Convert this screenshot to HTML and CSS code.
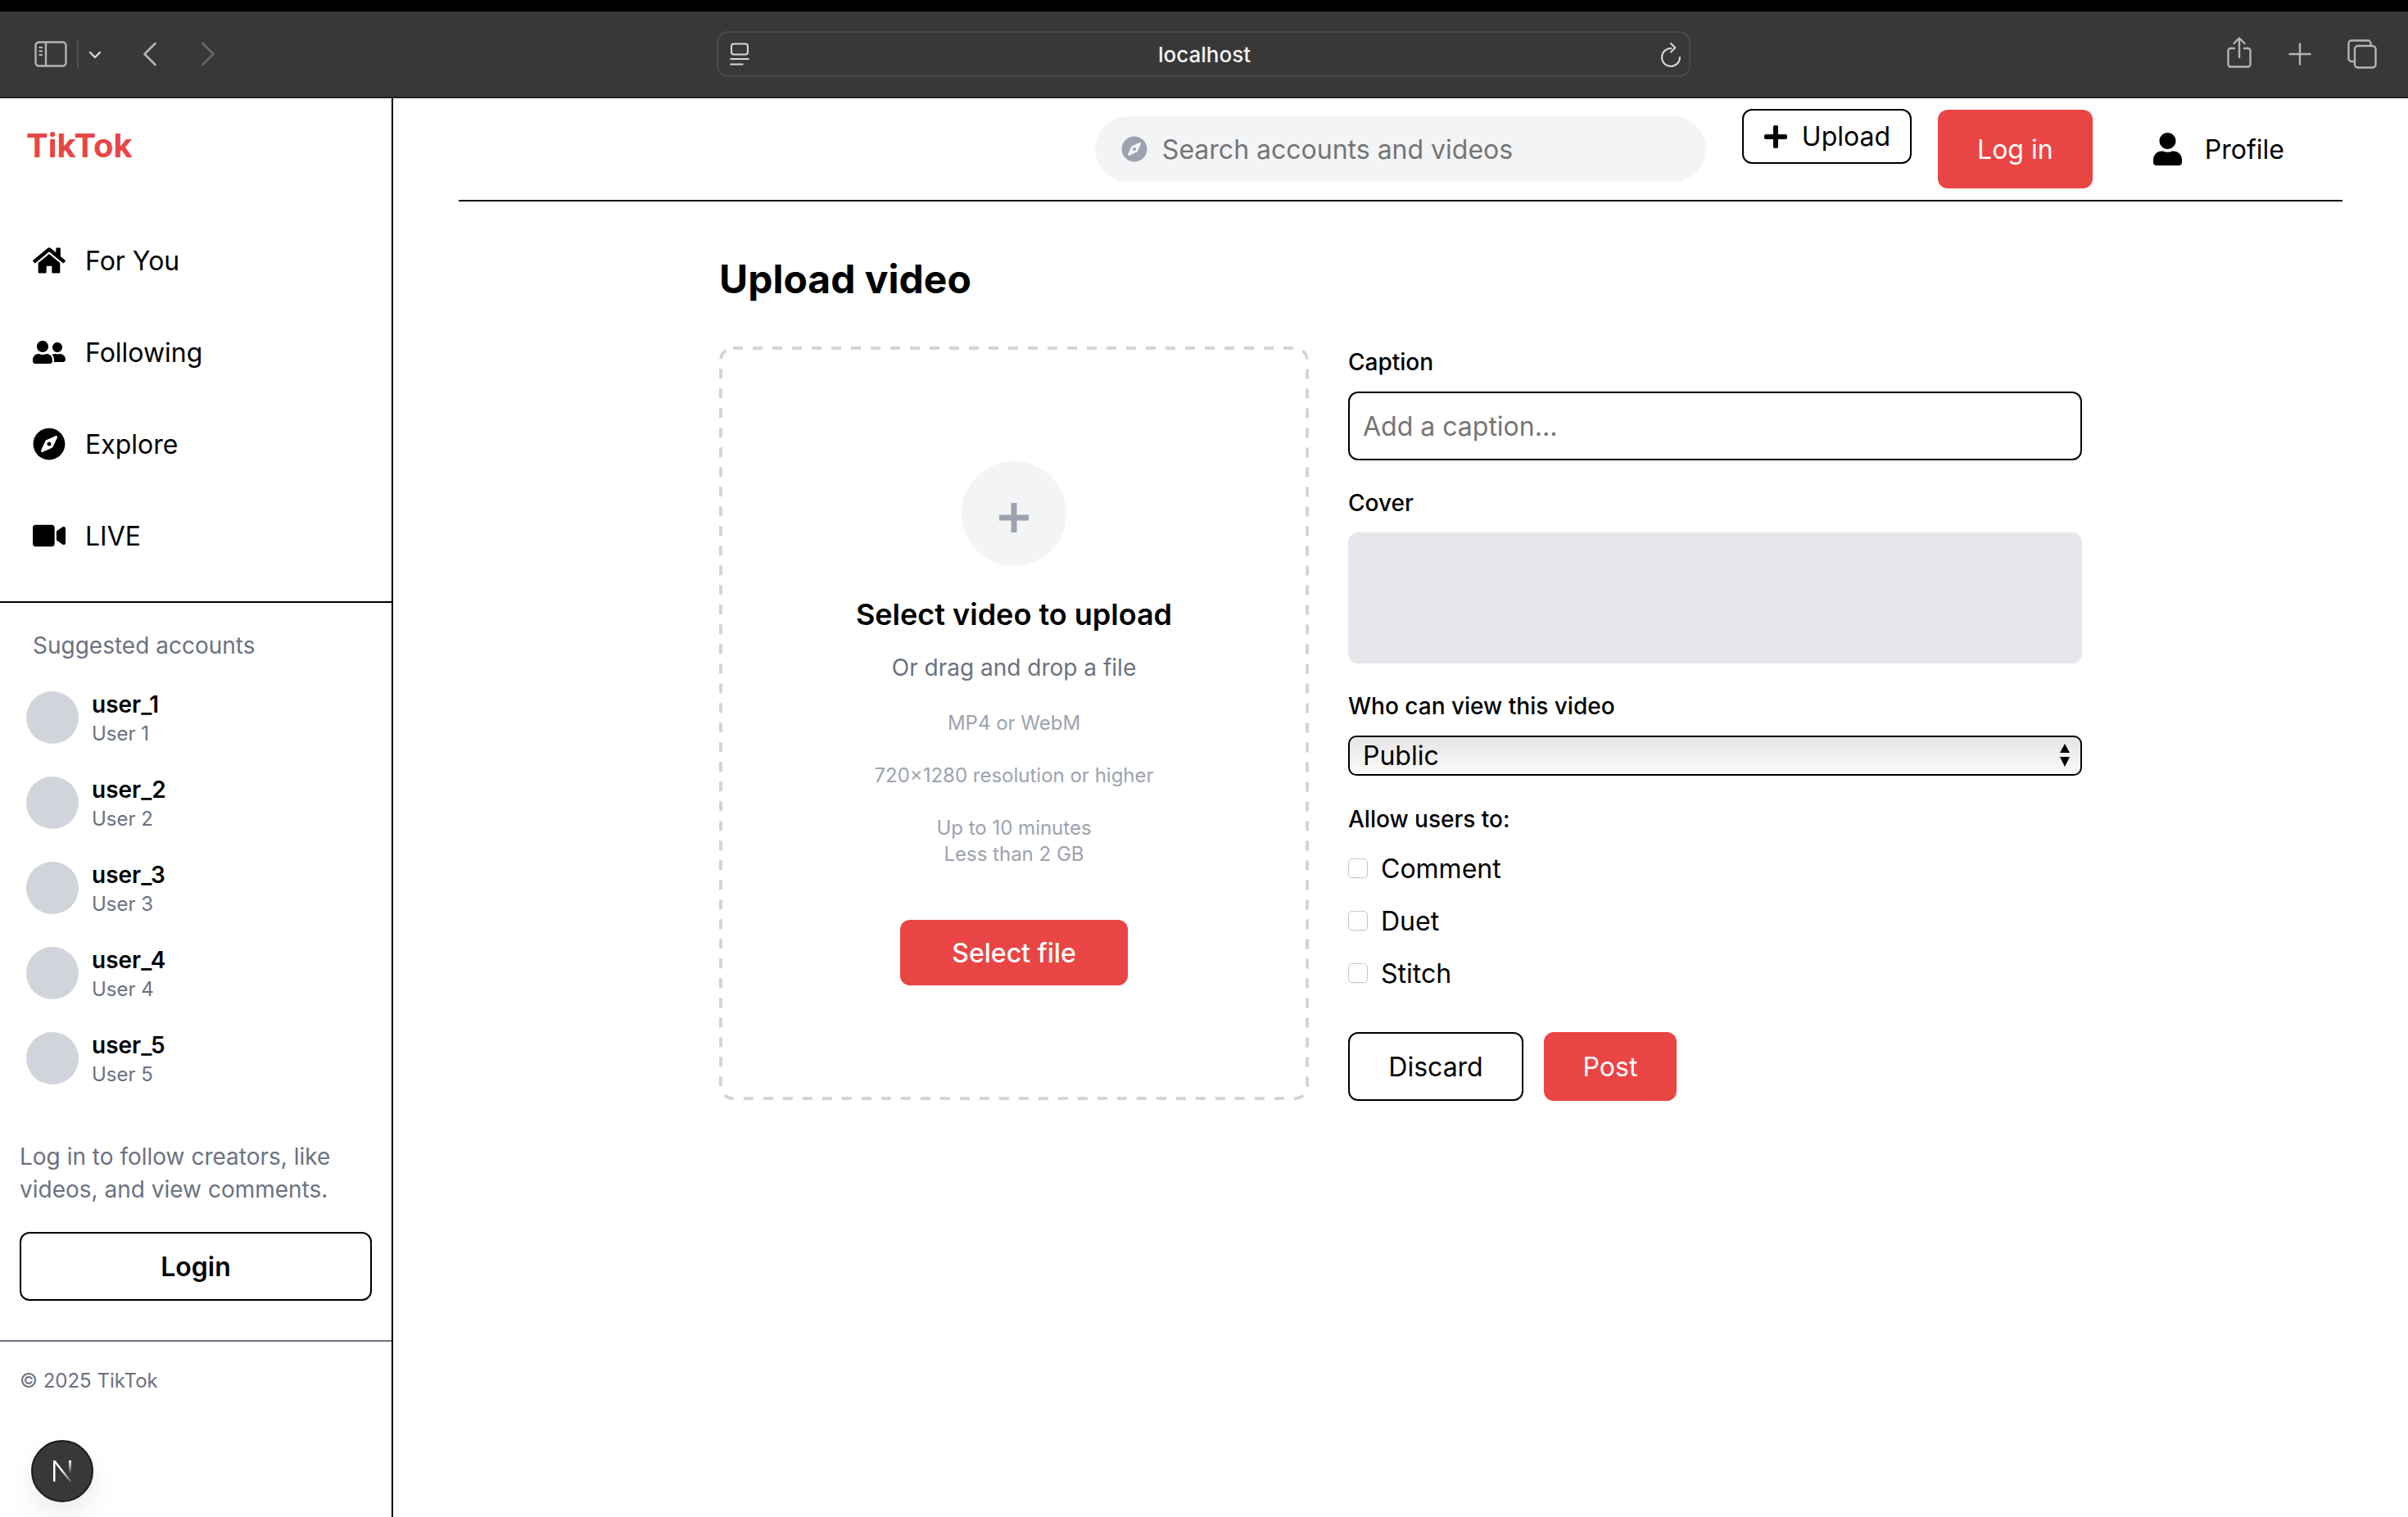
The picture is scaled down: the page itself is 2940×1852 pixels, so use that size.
FILE: index.html
```html
<!DOCTYPE html>
<html>
<head>
    <title>TikTok - Upload</title>
    <meta charset="utf-8">
    <link rel="stylesheet" href="styles.css">
</head>
<body>
    <div class="browser-bar">
        <div class="bar-left">
            <svg class="ic-sidebar" viewBox="0 0 40 32" fill="none" stroke="#b4b4b4" stroke-width="2.4"><rect x="1.5" y="1.5" width="37" height="29" rx="4"/><path d="M14 2v28"/><path d="M5.5 8h4.5M5.5 12.5h4.5M5.5 17h4.5" stroke-width="1.8"/></svg>
            <span class="bar-sep"></span>
            <svg class="ic-chevron" viewBox="0 0 16 10" fill="none" stroke="#d8d8d8" stroke-width="2.4" stroke-linecap="round" stroke-linejoin="round"><path d="M2 2l6 6 6-6"/></svg>
            <svg class="ic-back" viewBox="0 0 18 30" fill="none" stroke="#b4b4b4" stroke-width="2.6" stroke-linecap="round" stroke-linejoin="round"><path d="M15.500 2L2.500 15l13 13"/></svg>
            <svg class="ic-forward" viewBox="0 0 18 30" fill="none" stroke="#686868" stroke-width="2.6" stroke-linecap="round" stroke-linejoin="round"><path d="M2.500 2l13 13-13 13"/></svg>
        </div>
        <div class="url-bar">
            <svg class="ic-page" viewBox="0 0 24 28" fill="none" stroke="#d8d8d8" stroke-width="2"><rect x="2" y="1.500" width="20" height="13" rx="3"/><path d="M0.500 20h23M0.500 26.500h16"/></svg>
            <span class="url-text">localhost</span>
            <svg class="ic-reload" viewBox="0 0 28 32" fill="none" stroke="#dcdcdc" stroke-width="2" stroke-linecap="round" stroke-linejoin="round"><path d="M14.500 9A11 11 0 1 0 25 20"/><path d="M14 3l5.300 5.300L14 13.600"/></svg>
        </div>
        <div class="bar-right">
            <svg class="ic-share" viewBox="0 0 30 38" fill="none" stroke="#b4b4b4" stroke-width="2.400" stroke-linecap="round" stroke-linejoin="round"><path d="M9 14H4.500a3 3 0 0 0-3 3v16.500a3 3 0 0 0 3 3h21a3 3 0 0 0 3-3V17a3 3 0 0 0-3-3H21"/><path d="M15 25V2M8.500 8L15 1.500 21.500 8"/></svg>
            <svg class="ic-newtab" viewBox="0 0 28 28" fill="none" stroke="#b4b4b4" stroke-width="2.400" stroke-linecap="round"><path d="M14 1.500v25M1.500 14h25"/></svg>
            <svg class="ic-tabs" viewBox="0 0 36 36" fill="none" stroke="#b4b4b4" stroke-width="2.400"><path d="M8 27H5a3.500 3.500 0 0 1-3.500-3.500V5A3.500 3.500 0 0 1 5 1.500h20A3.500 3.500 0 0 1 28.500 5v3"/><rect x="9" y="8" width="25.500" height="26.500" rx="4"/></svg>
        </div>
    </div>

    <div class="app">
        <aside class="sidebar">
            <div class="logo">TikTok</div>
            <nav class="nav">
                <a class="nav-item">
                    <svg class="nav-icon" viewBox="0 0 576 512"><path d="M280.37 148.26L96 300.11V464a16 16 0 0 0 16 16l112.06-.29a16 16 0 0 0 15.92-16V368a16 16 0 0 1 16-16h64a16 16 0 0 1 16 16v95.64a16 16 0 0 0 16 16.05L464 480a16 16 0 0 0 16-16V300L295.67 148.26a12.19 12.19 0 0 0-15.3 0zM571.6 251.47L488 182.56V44.05a12 12 0 0 0-12-12h-56a12 12 0 0 0-12 12v72.61L318.47 43a48 48 0 0 0-61 0L4.34 251.47a12 12 0 0 0-1.6 16.9l25.5 31A12 12 0 0 0 45.15 301l235.22-193.74a12.19 12.19 0 0 1 15.3 0L530.9 301a12 12 0 0 0 16.9-1.6l25.5-31a12 12 0 0 0-1.7-16.93z"/></svg>
                    For You
                </a>
                <a class="nav-item">
                    <svg class="nav-icon" viewBox="0 0 640 512"><path d="M192 256c61.9 0 112-50.1 112-112S253.9 32 192 32 80 82.1 80 144s50.1 112 112 112zm76.8 32h-8.3c-20.8 10-43.9 16-68.5 16s-47.6-6-68.5-16h-8.3C51.6 288 0 339.6 0 403.2V432c0 26.5 21.5 48 48 48h288c26.5 0 48-21.5 48-48v-28.8c0-63.6-51.6-115.2-115.2-115.2zM480 256c53 0 96-43 96-96s-43-96-96-96-96 43-96 96 43 96 96 96zm48 32h-3.8c-13.9 4.8-28.6 8-44.2 8s-30.3-3.2-44.2-8H432c-20.4 0-39.2 5.9-55.7 15.4 24.4 26.3 39.7 61.2 39.7 99.8v38.4c0 2.2-.5 4.3-.6 6.4H592c26.5 0 48-21.5 48-48 0-61.9-50.1-112-112-112z"/></svg>
                    Following
                </a>
                <a class="nav-item">
                    <svg class="nav-icon" viewBox="0 0 496 512"><path d="M225.38 233.37c-12.5 12.5-12.5 32.76 0 45.25 12.49 12.5 32.76 12.5 45.25 0 12.5-12.5 12.5-32.76 0-45.25-12.5-12.49-32.76-12.49-45.25 0zM248 8C111.03 8 0 119.03 0 256s111.03 248 248 248 248-111.03 248-248S384.97 8 248 8zm126.14 148.05L308.17 300.4a31.938 31.938 0 0 1-15.77 15.77l-144.34 65.97c-16.65 7.61-33.81-9.55-26.2-26.2l65.98-144.35a31.938 31.938 0 0 1 15.77-15.77l144.34-65.97c16.65-7.6 33.8 9.55 26.19 26.2z"/></svg>
                    Explore
                </a>
                <a class="nav-item">
                    <svg class="nav-icon" viewBox="0 0 576 512"><path d="M336.2 64H47.8C21.4 64 0 85.4 0 111.8v288.4C0 426.6 21.4 448 47.8 448h288.4c26.4 0 47.8-21.4 47.8-47.8V111.8c0-26.4-21.4-47.8-47.8-47.8zm189.4 37.7L416 177.3v157.4l109.6 75.5c21.2 14.6 50.4-.3 50.4-25.8V127.5c0-25.4-29.1-40.4-50.4-25.8z"/></svg>
                    LIVE
                </a>
            </nav>

            <div class="suggested">
                <div class="suggested-title">Suggested accounts</div>
                <div class="account">
                    <div class="avatar"></div>
                    <div><div class="account-name">user_1</div><div class="account-sub">User 1</div></div>
                </div>
                <div class="account">
                    <div class="avatar"></div>
                    <div><div class="account-name">user_2</div><div class="account-sub">User 2</div></div>
                </div>
                <div class="account">
                    <div class="avatar"></div>
                    <div><div class="account-name">user_3</div><div class="account-sub">User 3</div></div>
                </div>
                <div class="account">
                    <div class="avatar"></div>
                    <div><div class="account-name">user_4</div><div class="account-sub">User 4</div></div>
                </div>
                <div class="account">
                    <div class="avatar"></div>
                    <div><div class="account-name">user_5</div><div class="account-sub">User 5</div></div>
                </div>
            </div>

            <div class="login-box">
                <p class="login-text">Log in to follow creators, like videos, and view comments.</p>
                <button class="login-btn">Login</button>
            </div>

            <div class="copyright">© 2025 TikTok</div>
            <div class="next-badge">
                <svg viewBox="0 0 28 30" width="28" height="30" fill="none">
                    <defs>
                        <linearGradient id="nFade" x1="0" y1="0" x2="1" y2="1"><stop offset="0.45" stop-color="#fff"/><stop offset="1" stop-color="#fff" stop-opacity="0.1"/></linearGradient>
                        <linearGradient id="nBar" x1="0" y1="0" x2="0" y2="1"><stop offset="0" stop-color="#fff"/><stop offset="0.8" stop-color="#fff" stop-opacity="0"/></linearGradient>
                    </defs>
                    <path d="M3 28V2h2.500L26 28h-3L5.500 6v22z" fill="url(#nFade)"/>
                    <rect x="22" y="2" width="3" height="20" fill="url(#nBar)"/>
                </svg>
            </div>
        </aside>

        <main class="main">
            <header class="topbar">
                <div class="search">
                    <svg class="search-icon" viewBox="0 0 496 512"><path d="M225.38 233.37c-12.5 12.5-12.5 32.76 0 45.25 12.49 12.5 32.76 12.5 45.25 0 12.5-12.5 12.5-32.76 0-45.25-12.5-12.49-32.76-12.49-45.25 0zM248 8C111.03 8 0 119.03 0 256s111.03 248 248 248 248-111.03 248-248S384.97 8 248 8zm126.14 148.05L308.17 300.4a31.938 31.938 0 0 1-15.77 15.77l-144.34 65.97c-16.65 7.61-33.81-9.55-26.2-26.2l65.98-144.35a31.938 31.938 0 0 1 15.77-15.77l144.34-65.97c16.65-7.6 33.8 9.55 26.19 26.2z"/></svg>
                    <input class="search-input" placeholder="Search accounts and videos">
                </div>
                <button class="upload-btn">
                    <svg class="upload-plus" viewBox="0 0 448 512"><path d="M416 208H272V64c0-17.67-14.33-32-32-32h-32c-17.67 0-32 14.33-32 32v144H32c-17.67 0-32 14.33-32 32v32c0 17.67 14.33 32 32 32h144v144c0 17.67 14.33 32 32 32h32c17.67 0 32-14.33 32-32V304h144c17.67 0 32-14.33 32-32v-32c0-17.67-14.33-32-32-32z"/></svg>
                    Upload
                </button>
                <button class="header-login">Log in</button>
                <a class="profile">
                    <svg class="profile-icon" viewBox="0 0 448 512"><path d="M224 256c70.7 0 128-57.3 128-128S294.7 0 224 0 96 57.3 96 128s57.3 128 128 128zm89.6 32h-16.7c-22.2 10.2-46.9 16-72.9 16s-50.6-5.8-72.9-16h-16.7C60.2 288 0 348.2 0 422.4V464c0 26.5 21.5 48 48 48h352c26.5 0 48-21.5 48-48v-41.6c0-74.2-60.2-134.4-134.4-134.4z"/></svg>
                    Profile
                </a>
            </header>

            <div class="content">
                <h1 class="page-title">Upload video</h1>
                <div class="upload-grid">
                    <div class="dropzone">
                        <svg class="dash-frame" width="720" height="920" fill="none"><rect x="2" y="2" width="716" height="916" rx="15" stroke="#d1d5db" stroke-width="4" stroke-dasharray="12 12"/></svg>
                        <div class="drop-circle">
                            <svg class="drop-plus" viewBox="0 0 36 36"><path d="M14.500 0h7v14.500H36v7H21.500V36h-7V21.500H0v-7h14.500z"/></svg>
                        </div>
                        <h2 class="drop-title">Select video to upload</h2>
                        <p class="drop-sub">Or drag and drop a file</p>
                        <p class="drop-note">MP4 or WebM</p>
                        <p class="drop-note">720×1280 resolution or higher</p>
                        <p class="drop-note">Up to 10 minutes<br>Less than 2 GB</p>
                        <button class="select-btn">Select file</button>
                    </div>

                    <form class="upload-form">
                        <label class="field-label">Caption</label>
                        <input class="caption-input" placeholder="Add a caption...">

                        <label class="field-label">Cover</label>
                        <div class="cover-box"></div>

                        <label class="field-label">Who can view this video</label>
                        <div class="select-wrap">
                            <select class="privacy-select"><option>Public</option></select>
                            <svg class="select-arrows" viewBox="0 0 14 28"><path d="M7 0l6 11H1zM1 16h12L7 28z"/></svg>
                        </div>

                        <label class="field-label allow-label">Allow users to:</label>
                        <label class="check-row"><input type="checkbox" class="check">Comment</label>
                        <label class="check-row"><input type="checkbox" class="check">Duet</label>
                        <label class="check-row"><input type="checkbox" class="check">Stitch</label>

                        <div class="form-actions">
                            <button type="button" class="discard-btn">Discard</button>
                            <button type="button" class="post-btn">Post</button>
                        </div>
                    </form>
                </div>
            </div>
        </main>
    </div>
</body>
</html>
```

FILE: styles.css
```css
* {
    box-sizing: border-box;
}
html, body {
    height: 100%;
}
body {
    margin: 0;
    height: 1852px;
    overflow: hidden;
    background: #fff;
    color: #000;
    font-family: Inter, "Liberation Sans", sans-serif;
    display: flex;
    flex-direction: column;
}
button, input, select {
    font-family: inherit;
    color: inherit;
}
button {
    cursor: pointer;
}

/* browser toolbar */
.browser-bar {
    height: 120px;
    flex: none;
    border-top: 14px solid #000;
    border-bottom: 2px solid #1f1f1f;
    background: #383838;
    display: flex;
    align-items: center;
}
.bar-left {
    display: flex;
    align-items: center;
    padding-left: 42px;
    width: 875px;
}
.ic-sidebar {
    width: 40px;
    height: 32px;
}
.bar-sep {
    width: 2px;
    height: 36px;
    margin: 0 12px;
    background: #4f4f4f;
}
.ic-chevron {
    width: 16px;
    height: 10px;
    margin-top: 2px;
}
.ic-back {
    width: 18px;
    height: 30px;
    margin-left: 50px;
}
.ic-forward {
    width: 18px;
    height: 30px;
    margin-left: 53px;
}
.url-bar {
    width: 1189px;
    height: 56px;
    margin-top: -1px;
    border: 2px solid #4a4a4a;
    border-radius: 14px;
    padding: 0 8px 0 14px;
    display: flex;
    align-items: center;
    justify-content: space-between;
}
.ic-page {
    width: 24px;
    height: 28px;
}
.url-text {
    padding-top: 1px;
    color: #f2f2f2;
    font-size: 26px;
    font-weight: 500;
}
.ic-reload {
    width: 28px;
    height: 32px;
}
.bar-right {
    flex: 1;
    display: flex;
    align-items: center;
    padding-left: 655px;
}
.ic-share {
    width: 30px;
    height: 38px;
    margin-top: -4px;
}
.ic-newtab {
    width: 28px;
    height: 28px;
    margin-left: 45px;
}
.ic-tabs {
    width: 36px;
    height: 36px;
    margin-left: 44px;
}

/* sidebar */
.app {
    flex: 1;
    display: flex;
    min-height: 0;
}
.sidebar {
    width: 480px;
    flex: none;
    border-right: 2px solid #000;
    position: relative;
}
.logo {
    padding: 26px 0 0 32px;
    height: 142px;
    color: #e94545;
    font-size: 40px;
    line-height: 64px;
    font-weight: 700;
}
.nav-item {
    height: 112px;
    padding-left: 40px;
    display: flex;
    align-items: center;
    gap: 24px;
    font-size: 32px;
}
.nav-icon {
    width: 40px;
    height: 40px;
}
.nav {
    border-bottom: 2px solid #000;
    padding-bottom: 24px;
}
.suggested {
    padding: 32px 32px 0;
}
.suggested-title {
    padding-left: 8px;
    margin-bottom: 32px;
    color: #6b7280;
    font-size: 28px;
    line-height: 40px;
}
.account {
    display: flex;
    align-items: center;
    gap: 16px;
    height: 72px;
    margin-bottom: 32px;
}
.avatar {
    width: 64px;
    height: 64px;
    border-radius: 50%;
    background: #d1d5db;
}
.account-name {
    font-size: 28px;
    line-height: 40px;
    font-weight: 600;
}
.account-sub {
    color: #6b7280;
    font-size: 24px;
    line-height: 32px;
}
.login-box {
    padding: 32px 24px 48px;
    border-bottom: 2px solid #6b7280;
}
.login-text {
    margin: 0 0 32px;
    color: #6b7280;
    font-size: 28px;
    line-height: 40px;
}
.login-btn {
    width: 100%;
    height: 84px;
    background: #fff;
    border: 2px solid #000;
    border-radius: 12px;
    font-size: 32px;
    font-weight: 600;
}
.copyright {
    padding: 32px 24px;
    color: #6b7280;
    font-size: 24px;
    line-height: 32px;
}
.next-badge {
    position: absolute;
    left: 38px;
    bottom: 18px;
    width: 76px;
    height: 76px;
    border-radius: 50%;
    background: #383838;
    border: 2px solid #1c1c1c;
    box-shadow: 0 16px 32px rgba(0, 0, 0, 0.08);
    display: flex;
    align-items: center;
    justify-content: center;
}

/* main column */
.main {
    flex: 1;
    min-width: 0;
    padding: 0 80px;
}
.topbar {
    height: 126px;
    border-bottom: 2px solid #000;
    display: flex;
    align-items: center;
    justify-content: flex-end;
    padding-right: 71px;
}
.search {
    width: 746px;
    height: 80px;
    margin-right: 44px;
    padding: 0 32px;
    border-radius: 40px;
    background: #f3f4f6;
    display: flex;
    align-items: center;
    gap: 18px;
}
.search-icon {
    width: 32px;
    height: 32px;
    flex: none;
    fill: #9ca3af;
}
.search-input {
    flex: 1;
    min-width: 0;
    border: 0;
    background: transparent;
    font-size: 32px;
    outline: none;
    padding: 0;
}
.upload-btn {
    align-self: flex-start;
    margin: 13px 32px 0 0;
    height: 67px;
    width: 207px;
    background: #fff;
    border: 2px solid #000;
    border-radius: 12px;
    display: flex;
    align-items: center;
    gap: 18px;
    padding: 0 0 0 25px;
    font-size: 32px;
}
.upload-plus {
    width: 28px;
    height: 32px;
}
.header-login {
    width: 189px;
    height: 96px;
    margin-right: 74px;
    border: 0;
    border-radius: 12px;
    background: #e94545;
    color: #fff;
    font-size: 32px;
}
.profile {
    display: flex;
    align-items: center;
    gap: 28px;
    font-size: 32px;
}
.profile-icon {
    width: 35px;
    height: 40px;
}

.content {
    width: 1664px;
    margin: 0 auto;
    padding-top: 63px;
}
.page-title {
    margin: 0 0 50px;
    font-size: 48px;
    line-height: 64px;
    font-weight: 700;
}
.upload-grid {
    display: grid;
    grid-template-columns: 720px 896px;
    gap: 48px;
    align-items: start;
}

/* drop area */
.dropzone {
    position: relative;
    height: 920px;
    padding-top: 140px;
    display: flex;
    flex-direction: column;
    align-items: center;
    text-align: center;
}
.dash-frame {
    position: absolute;
    left: 0;
    top: 0;
}
.drop-circle {
    width: 128px;
    height: 128px;
    margin-bottom: 35px;
    padding-top: 10px;
    border-radius: 50%;
    background: #f3f4f6;
    display: flex;
    align-items: center;
    justify-content: center;
}
.drop-plus {
    width: 36px;
    height: 36px;
    fill: #9ca3af;
}
.drop-title {
    margin: 0 0 21px;
    font-size: 36px;
    line-height: 48px;
    font-weight: 600;
}
.drop-sub {
    margin: 0 0 32px;
    color: #6b7280;
    font-size: 28px;
    line-height: 40px;
}
.drop-note {
    margin: 0 0 32px;
    color: #9ca3af;
    font-size: 24px;
    line-height: 32px;
}
.select-btn {
    width: 278px;
    height: 80px;
    margin-top: 32px;
    border: 0;
    border-radius: 12px;
    background: #e94545;
    color: #fff;
    font-size: 32px;
    font-weight: 500;
}

/* form */
.upload-form {
    margin-top: -1px;
}
.field-label {
    display: block;
    margin-bottom: 16px;
    font-size: 28px;
    line-height: 40px;
    font-weight: 500;
}
.caption-input {
    display: block;
    width: 100%;
    height: 84px;
    margin-bottom: 32px;
    padding: 0 16px;
    border: 2px solid #000;
    border-radius: 12px;
    font-size: 32px;
    outline: none;
}
.cover-box {
    height: 160px;
    margin-bottom: 32px;
    border-radius: 12px;
    background: #e5e7eb;
}
.select-wrap {
    position: relative;
    height: 49px;
    margin-bottom: 33px;
}
.privacy-select {
    appearance: none;
    display: block;
    width: 100%;
    height: 49px;
    padding: 0 16px;
    border: 2px solid #000;
    border-radius: 10px;
    background: linear-gradient(#e4e4e4, #fbfbfb);
    font-size: 32px;
}
.select-arrows {
    position: absolute;
    right: 14px;
    top: 10px;
    width: 14px;
    height: 28px;
}
.allow-label {
    margin-bottom: 20px;
}
.check-row {
    display: flex;
    align-items: center;
    gap: 16px;
    height: 40px;
    margin-bottom: 24px;
    font-size: 32px;
}
.check {
    appearance: none;
    width: 24px;
    height: 24px;
    margin: 0;
    border: 1px solid #c8c8c8;
    border-radius: 5px;
    background: #fff;
    box-shadow: 0 1px 1px rgba(0, 0, 0, 0.06);
}
.form-actions {
    display: flex;
    gap: 25px;
    margin-top: 52px;
}
.discard-btn {
    width: 214px;
    height: 84px;
    border: 2px solid #000;
    border-radius: 12px;
    background: #fff;
    font-size: 32px;
}
.post-btn {
    width: 162px;
    height: 84px;
    border: 0;
    border-radius: 12px;
    background: #e94545;
    color: #fff;
    font-size: 32px;
}
```
